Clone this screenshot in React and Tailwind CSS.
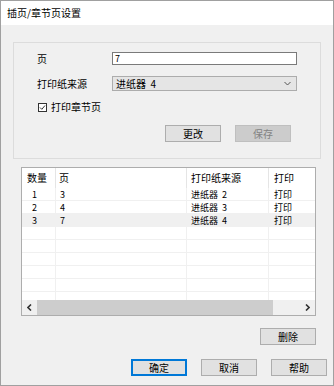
import React from "react";

const font = "font-['Noto_Sans_CJK_SC','Liberation_Sans',sans-serif]";

function Btn({ children, primary, disabled, className = "" }) {
  const base = "h-[17px] w-[56px] flex items-center justify-center text-[10px] leading-none border";
  const look = disabled
    ? "bg-[#cccccc] border-[#bfbfbf] text-[#838383]"
    : primary
    ? "bg-[#e1e1e1] border-[#0078d7] shadow-[inset_0_0_0_1px_#0078d7] text-black"
    : "bg-[#e1e1e1] border-[#adadad] text-black";
  return <div className={`${base} ${look} ${className}`}>{children}</div>;
}

const rows = [
  { n: "1", p: "3", src: "进纸器\u00a0\u00a02", pr: "打印" },
  { n: "2", p: "4", src: "进纸器\u00a0\u00a03", pr: "打印" },
  { n: "3", p: "7", src: "进纸器\u00a0\u00a04", pr: "打印", sel: true },
];

export default function App() {
  const empty = Array.from({ length: 6 });
  return (
    <div className={`w-[334px] h-[386px] border border-[#a0a0a0] bg-[#f0f0f0] flex flex-col text-black ${font}`}>
      {/* 标题栏 */}
      <div className="h-[24px] bg-white flex items-center pl-[6px] text-[10px] leading-none">插页/章节页设置</div>

      {/* 分组框 */}
      <div className="ml-[12px] mt-[17px] w-[308px] h-[117px] border border-[#dcdcdc] flex flex-col">
        <div className="mt-[9px] flex items-center h-[13px]">
          <div className="pl-[23px] w-[98px] text-[10px] leading-none">页</div>
          <div className="w-[185px] h-[13px] bg-white border border-[#7a7a7a] flex items-center pl-[2px] text-[9px] leading-none">7</div>
        </div>
        <div className="mt-[11px] flex items-center h-[15px]">
          <div className="pl-[23px] w-[98px] text-[10px] leading-none">打印纸来源</div>
          <div className="w-[185px] h-[15px] bg-[#e5e5e5] border border-[#acacac] flex items-center justify-between pl-[3px] pr-[5px] text-[10px] leading-none">
            <span>进纸器&nbsp;&nbsp;4</span>
            <svg width="7" height="5" viewBox="0 0 7 5">
              <polyline points="0.5,1 3.5,4 6.5,1" fill="none" stroke="#555" strokeWidth="1" />
            </svg>
          </div>
        </div>
        <div className="mt-[10px] flex items-center h-[12px] pl-[24px] gap-[4px]">
          <svg width="9" height="9" viewBox="0 0 9 9">
            <rect x="0.5" y="0.5" width="8" height="8" fill="white" stroke="#333" />
            <polyline points="2,4.5 3.8,6.3 7,2.5" fill="none" stroke="#333" strokeWidth="1" />
          </svg>
          <span className="text-[10px] leading-none">打印章节页</span>
        </div>
        <div className="mt-[12px] flex justify-end pr-[29px] gap-[14px]">
          <Btn>更改</Btn>
          <Btn disabled>保存</Btn>
        </div>
      </div>

      {/* 列表 */}
      <div className="ml-[20px] mt-[8px] w-[295px] h-[149px] border border-[#adadad] bg-white flex flex-col overflow-hidden">
        <div className="flex-1 overflow-hidden flex flex-col">
          <div className="flex h-[20px] items-center text-[10px] leading-none shrink-0">
            <div className="w-[34px] h-full flex items-center pl-[5px] border-r border-[#e5e5e5]">数量</div>
            <div className="w-[131px] h-full flex items-center pl-[3px] border-r border-[#e5e5e5]">页</div>
            <div className="w-[82px] h-full flex items-center pl-[4px] border-r border-[#e5e5e5]">打印纸来源</div>
            <div className="flex-1 h-full flex items-center pl-[5px]">打印</div>
          </div>
          {rows.map((r) => (
            <div key={r.n} className={`flex h-[13px] shrink-0 items-center text-[9px] leading-[9px] border-b border-[#f0f0f0] overflow-hidden ${r.sel ? "bg-[#f0f0f0]" : ""}`}>
              <div className="w-[34px] h-full flex items-center pl-[10px] border-r border-[#f0f0f0]">{r.n}</div>
              <div className="w-[131px] h-full flex items-center pl-[4px] border-r border-[#f0f0f0]">{r.p}</div>
              <div className="w-[82px] h-full flex items-center pl-[4px] border-r border-[#f0f0f0]">{r.src}</div>
              <div className="flex-1 h-full flex items-center pl-[5px]">{r.pr}</div>
            </div>
          ))}
          {empty.map((_, i) => (
            <div key={i} className="flex h-[13px] shrink-0 border-b border-[#f0f0f0]">
              <div className="w-[34px] h-full border-r border-[#f0f0f0]" />
              <div className="w-[131px] h-full border-r border-[#f0f0f0]" />
              <div className="w-[82px] h-full border-r border-[#f0f0f0]" />
              <div className="flex-1" />
            </div>
          ))}
        </div>
        {/* 滚动条 */}
        <div className="h-[15px] shrink-0 bg-[#f0f0f0] flex items-center">
          <div className="w-[15px] h-full flex items-center justify-center">
            <svg width="5" height="7" viewBox="0 0 5 7">
              <polyline points="4,0.5 1,3.5 4,6.5" fill="none" stroke="#333" strokeWidth="1.6" />
            </svg>
          </div>
          <div className="w-[236px] h-full bg-[#cdcdcd]" />
          <div className="flex-1" />
          <div className="w-[15px] h-full flex items-center justify-center">
            <svg width="5" height="7" viewBox="0 0 5 7">
              <polyline points="1,0.5 4,3.5 1,6.5" fill="none" stroke="#333" strokeWidth="1.6" />
            </svg>
          </div>
        </div>
      </div>

      <div className="mt-[12px] w-[315px] flex justify-end">
        <Btn>删除</Btn>
      </div>

      <div className="mt-[14px] flex justify-end pr-[6px] gap-[14px]">
        <Btn primary>确定</Btn>
        <Btn>取消</Btn>
        <Btn>帮助</Btn>
      </div>
    </div>
  );
}
